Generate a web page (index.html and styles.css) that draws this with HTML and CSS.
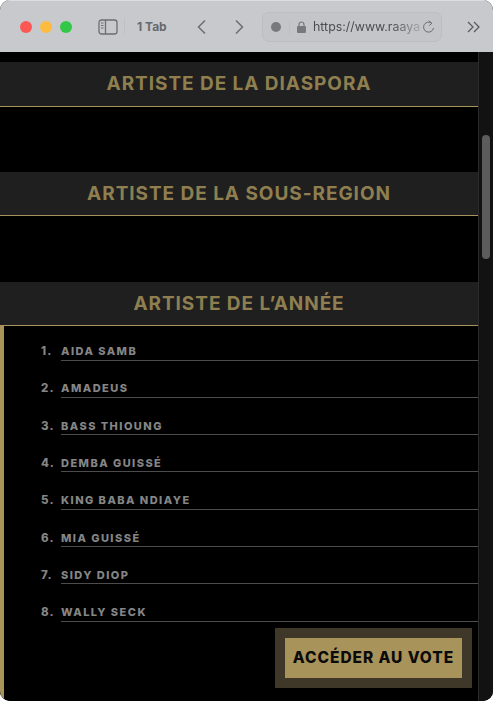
FILE: index.html
```html
<!DOCTYPE html>
<html lang="fr">
<head>
  <meta charset="UTF-8">
  <meta name="viewport" content="width=device-width, initial-scale=1.0">
  <title>Raaya</title>
  <link rel="stylesheet" href="styles.css">
</head>
<body>
  <div class="window">
    <div class="toolbar">
      <div class="lights">
        <span class="light red"></span>
        <span class="light yellow"></span>
        <span class="light green"></span>
      </div>
      <svg class="sidebar-icon" width="20" height="16" viewBox="0 0 20 16" fill="none" stroke="#6b6e72" stroke-width="1.3">
        <rect x="1" y="1" width="18" height="14" rx="2.5"/>
        <path d="M7.5 1v14"/>
        <path d="M3 4h2.5M3 6.5h2.5M3 9h2.5" stroke-width="1"/>
      </svg>
      <span class="sep"></span>
      <span class="tabs">1 Tab</span>
      <svg class="nav back" width="10" height="16" viewBox="0 0 10 16" fill="none" stroke="#6b6e72" stroke-width="1.5"><path d="M8 1.5 1.5 8 8 14.5"/></svg>
      <svg class="nav forward" width="10" height="16" viewBox="0 0 10 16" fill="none" stroke="#6b6e72" stroke-width="1.5"><path d="M2 1.5 8.500 8 2 14.500"/></svg>
      <div class="address">
        <span class="favicon"></span>
        <span class="addr-sep"></span>
        <svg class="lock" width="9" height="12" viewBox="0 0 9 12"><path d="M2 5V3.500a2.500 2.500 0 0 1 5 0V5" fill="none" stroke="#77797d" stroke-width="1.200"/><rect y="5" width="9" height="7" rx="1.200" fill="#77797d"/></svg>
        <span class="url">https://www.raaya</span>
        <svg class="reload" width="13" height="14" viewBox="0 0 13 14" fill="none" stroke="#6b6e72" stroke-width="1"><path d="M9.800 3.300A5 5 0 1 0 11.500 8"/><path d="M6.800 0.800 9.800 3.300 7.200 5.600"/></svg>
      </div>
      <svg class="more" width="13" height="12" viewBox="0 0 13 12" fill="none" stroke="#55585c" stroke-width="1.200"><path d="M1 1l5 5-5 5M7 1l5 5-5 5"/></svg>
    </div>

    <div class="page">
      <div class="content">
        <section class="category">
          <h2 class="category-title">ARTISTE DE LA DIASPORA</h2>
        </section>
        <section class="category">
          <h2 class="category-title">ARTISTE DE LA SOUS-REGION</h2>
        </section>
        <section class="category">
          <h2 class="category-title">ARTISTE DE L’ANNÉE</h2>
          <ol class="nominees">
            <li class="nominee"><span class="rank">1.</span><span class="name">AIDA SAMB</span></li>
            <li class="nominee"><span class="rank">2.</span><span class="name">AMADEUS</span></li>
            <li class="nominee"><span class="rank">3.</span><span class="name">BASS THIOUNG</span></li>
            <li class="nominee"><span class="rank">4.</span><span class="name">DEMBA GUISSÉ</span></li>
            <li class="nominee"><span class="rank">5.</span><span class="name">KING BABA NDIAYE</span></li>
            <li class="nominee"><span class="rank">6.</span><span class="name">MIA GUISSÉ</span></li>
            <li class="nominee"><span class="rank">7.</span><span class="name">SIDY DIOP</span></li>
            <li class="nominee"><span class="rank">8.</span><span class="name">WALLY SECK</span></li>
          </ol>
        </section>
      </div>
      <div class="scrollbar"><span class="thumb"></span></div>
      <a class="vote-btn" href="#">ACCÉDER AU VOTE</a>
    </div>
  </div>
</body>
</html>
```

FILE: styles.css
```css
html, body {
  margin: 0;
  padding: 0;
  background-color: #fff;
}
body {
  font-family: Inter, "Liberation Sans", sans-serif;
  width: 493px;
  height: 701px;
  overflow: hidden;
}
.window {
  width: 493px;
  height: 701px;
  border-radius: 10px;
  overflow: hidden;
  background-color: #000;
  display: flex;
  flex-direction: column;
}
.toolbar {
  height: 52px;
  flex-shrink: 0;
  display: flex;
  align-items: center;
  background-color: #c7c9cc;
  border-top: 1px solid #dcdddf;
  box-sizing: border-box;
}
.lights {
  display: flex;
  gap: 8px;
  margin-left: 20px;
}
.light {
  width: 12px;
  height: 12px;
  border-radius: 50%;
}
.red { background-color: #fc5753; }
.yellow { background-color: #fdbc40; }
.green { background-color: #33c748; }
.sidebar-icon {
  margin-left: 26px;
}
.sep {
  width: 1px;
  height: 16px;
  margin-left: 6px;
  background-color: #bdbfc2;
}
.tabs {
  margin-left: 12px;
  width: 31px;
  white-space: nowrap;
  font-size: 12px;
  font-weight: 700;
  color: #66696d;
}
.nav.back {
  margin-left: 29px;
}
.nav.forward {
  margin-left: 27px;
}
.address {
  margin-left: 18px;
  width: 180px;
  height: 30px;
  box-sizing: border-box;
  display: flex;
  align-items: center;
  border: 1px solid #bcbec1;
  border-radius: 7px;
  background-color: #c3c5c8;
}
.favicon {
  width: 10px;
  height: 10px;
  margin-left: 8px;
  border-radius: 50%;
  background-color: #77797d;
}
.addr-sep {
  width: 1px;
  height: 16px;
  margin-left: 8px;
  background-color: #bec0c3;
}
.lock {
  margin-left: 7px;
}
.url {
  margin-left: 7px;
  width: 108px;
  white-space: nowrap;
  font-size: 12.4px;
  color: #4b4d50;
  -webkit-mask-image: linear-gradient(to right, #000 72%, rgba(0,0,0,0.2) 100%);
  mask-image: linear-gradient(to right, #000 72%, rgba(0,0,0,0.2) 100%);
}
.reload {
  margin-left: 1px;
}
.more {
  margin-left: 25px;
}
.page {
  position: relative;
  flex: 1;
  display: flex;
  min-height: 0;
}
.content {
  width: 478px;
  padding-top: 10px;
  box-sizing: border-box;
  background-color: #000;
}
.category {
  padding-bottom: 65.3px;
}
.category:last-child {
  padding-bottom: 0;
}
.category-title {
  margin: 0;
  height: 43.5px;
  line-height: 44px;
  text-align: center;
  font-size: 19px;
  font-weight: 700;
  letter-spacing: 0.95px;
  color: #8f7f50;
  background-color: #1f1f1f;
  border-bottom: 1px solid #a8935a;
}
.nominees {
  list-style: none;
  margin: 0;
  padding: 0 0 80px 37px;
  border-left: 4px solid #a8935a;
}
.nominee {
  display: flex;
  align-items: flex-end;
  height: 37.3px;
}
.nominee:first-child {
  height: 34.5px;
}
.rank {
  width: 20px;
  font-size: 11.5px;
  font-weight: 800;
  letter-spacing: 1.2px;
  line-height: 14px;
  color: #858585;
  padding-bottom: 2.5px;
}
.name {
  flex: 1;
  font-size: 11px;
  font-weight: 800;
  letter-spacing: 1.45px;
  line-height: 14px;
  color: #858585;
  padding-bottom: 1.5px;
  border-bottom: 1px solid #4c4c4c;
}
.scrollbar {
  width: 15px;
  background-color: #121212;
  border-left: 1px solid #2a2a2a;
  box-sizing: border-box;
  padding: 83px 0 0 3px;
}
.thumb {
  display: block;
  width: 8px;
  height: 124px;
  border-radius: 4px;
  background-color: #5c5c5c;
}
.vote-btn {
  position: absolute;
  left: 275px;
  top: 576px;
  width: 177px;
  height: 40px;
  line-height: 40px;
  text-align: center;
  border: 10px solid #3f3829;
  background-color: #a8935a;
  color: #0b0b0b;
  font-size: 15.5px;
  font-weight: 800;
  letter-spacing: 0.95px;
  white-space: nowrap;
  text-decoration: none;
}
```
